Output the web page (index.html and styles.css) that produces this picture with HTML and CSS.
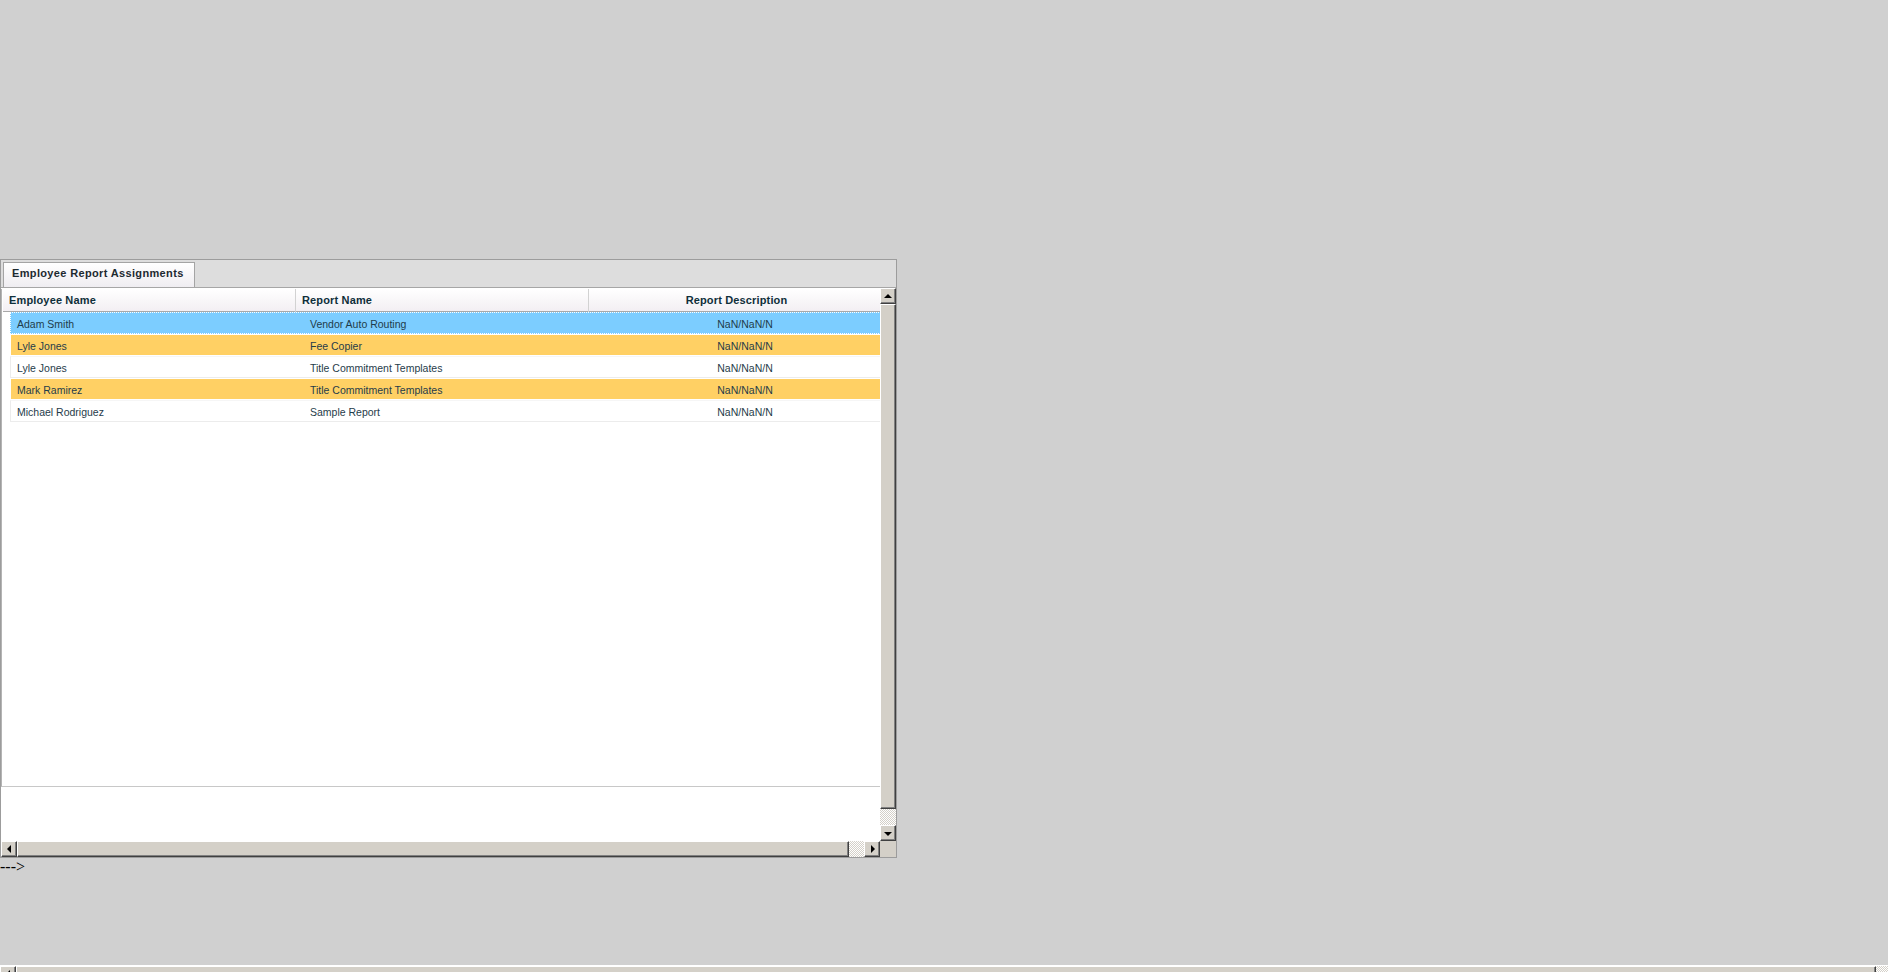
FILE: index.html
```html
<!DOCTYPE html>
<html>
<head>
    <meta charset="utf-8">
    <title>Employee Report Assignments</title>
    <link rel="stylesheet" href="styles.css">
</head>
<body>
    <div class="page">
        <div class="panel">
            <div class="tabbar">
                <div class="tab">Employee Report Assignments</div>
            </div>

            <div class="frame">
                <div class="viewport">
                    <div class="grid">
                        <div class="grid-head">
                            <div class="th">Employee Name</div>
                            <div class="th">Report Name</div>
                            <div class="th th-center">Report Description</div>
                        </div>
                        <div class="rows">
                            <div class="row row-selected">
                                <div class="td">Adam Smith</div>
                                <div class="td">Vendor Auto Routing</div>
                                <div class="td td-center">NaN/NaN/N</div>
                            </div>
                            <div class="row row-alert">
                                <div class="td">Lyle Jones</div>
                                <div class="td">Fee Copier</div>
                                <div class="td td-center">NaN/NaN/N</div>
                            </div>
                            <div class="row">
                                <div class="td">Lyle Jones</div>
                                <div class="td">Title Commitment Templates</div>
                                <div class="td td-center">NaN/NaN/N</div>
                            </div>
                            <div class="row row-alert">
                                <div class="td">Mark Ramirez</div>
                                <div class="td">Title Commitment Templates</div>
                                <div class="td td-center">NaN/NaN/N</div>
                            </div>
                            <div class="row">
                                <div class="td">Michael Rodriguez</div>
                                <div class="td">Sample Report</div>
                                <div class="td td-center">NaN/NaN/N</div>
                            </div>
                        </div>
                    </div>
                </div>

                <div class="vscroll">
                    <div class="sb-btn"><span class="arrow arrow-up"></span></div>
                    <div class="sb-thumb sb-thumb-v"></div>
                    <div class="sb-track"></div>
                    <div class="sb-btn"><span class="arrow arrow-down"></span></div>
                </div>

                <div class="hscroll">
                    <div class="sb-btn"><span class="arrow arrow-left"></span></div>
                    <div class="sb-thumb sb-thumb-h"></div>
                    <div class="sb-track"></div>
                    <div class="sb-btn"><span class="arrow arrow-right"></span></div>
                </div>

                <div class="corner"></div>
            </div>
        </div>

        <div class="trail">---&gt;</div>

        <div class="page-scroll">
            <div class="sb-btn"><span class="arrow arrow-left"></span></div>
            <div class="sb-thumb page-thumb"></div>
            <div class="sb-track"></div>
        </div>
    </div>
</body>
</html>
```

FILE: styles.css
```css
* {
    margin: 0;
    padding: 0;
    box-sizing: border-box;
}

html, body {
    height: 100%;
    overflow: hidden;
}

body {
    background: #d0d0d0;
    font-family: "Liberation Serif", serif;
    font-size: 16px;
    color: #000;
}

.page {
    padding-top: 259px;
}

/* panel + tab strip */

.panel {
    width: 897px;
    border: 1px solid #9c9c9c;
    background: #dddddd;
}

.tabbar {
    height: 28px;
    padding: 2px 0 0 2px;
    border-bottom: 1px solid #a6a6a6;
}

.tab {
    width: 192px;
    height: 25px;
    border: 1px solid #a4a4a4;
    border-bottom: none;
    background: linear-gradient(#ffffff, #efedf1);
    font-family: "Liberation Sans", Arial, sans-serif;
    font-size: 11px;
    font-weight: bold;
    letter-spacing: 0.35px;
    color: #1d2a30;
    line-height: 20px;
    padding-left: 8px;
    white-space: nowrap;
}

/* scroll frame */

.frame {
    display: grid;
    grid-template-columns: 1fr 16px;
    grid-template-rows: 553px 16px;
    background: #fff;
}

.viewport {
    overflow: hidden;
    background: #fff;
    padding-top: 1px;
}

.grid {
    width: 896px;
    height: 498px;
    border-left: 1px solid #b4b4b4;
    border-bottom: 1px solid #c8c8c8;
    font-family: "Liberation Sans", Arial, sans-serif;
    font-size: 11px;
}

.grid-head {
    display: grid;
    grid-template-columns: 293px 293px 295px;
    height: 23px;
    margin-left: 1px;
    background: linear-gradient(#ffffff, #f3eff3);
    border-bottom: 1px solid #a8a8a8;
}

.th {
    font-weight: bold;
    letter-spacing: 0.15px;
    color: #0f2f3a;
    line-height: 23px;
    padding-left: 6px;
    border-right: 1px solid #d2d2d2;
    white-space: nowrap;
}

.th-center {
    text-align: center;
    padding-left: 0;
    border-right: none;
}

.rows {
    margin-left: 8px;
}

.row {
    display: grid;
    grid-template-columns: 293px 293px 296px;
    height: 22px;
    border: 1px solid #ececec;
    border-top-color: #f6f6f6;
    background: #fff;
    background-clip: padding-box;
    color: #1f3c4a;
    font-size: 10.5px;
    padding-top: 2px;
    line-height: 19px;
}

.row-alert {
    background: #ffd064;
    border-color: #fff;
}

.row-selected {
    background: #7ccdff;
    background-clip: border-box;
    border: 1px dotted #fff;
}

.td {
    padding-left: 6px;
    white-space: nowrap;
}

.td-center {
    text-align: center;
    padding-left: 0;
}

/* classic scrollbars */

.vscroll {
    display: flex;
    flex-direction: column;
    background: #d4d0c8;
}

.hscroll,
.page-scroll {
    display: flex;
    background: #d4d0c8;
}

.sb-btn {
    flex: none;
    width: 16px;
    height: 16px;
    background: #d4d0c8;
    border: 1px solid;
    border-color: #ffffff #404040 #404040 #ffffff;
    box-shadow: inset -1px -1px #808080;
    display: flex;
    align-items: center;
    justify-content: center;
}

.sb-thumb {
    flex: none;
    background: #d4d0c8;
    border: 1px solid;
    border-color: #ffffff #404040 #404040 #ffffff;
    box-shadow: inset -1px -1px #808080;
}

.sb-thumb-v {
    width: 16px;
    height: 505px;
}

.sb-thumb-h {
    height: 16px;
    width: 832px;
}

.sb-track {
    flex: 1;
    background-color: #fff;
    background-image: repeating-conic-gradient(#d4d0c8 0 25%, #ffffff 0 50%);
    background-size: 2px 2px;
}

.corner {
    background: #d4d0c8;
}

.arrow {
    width: 0;
    height: 0;
    border: 4px solid transparent;
}

.arrow-up {
    border-bottom-color: #000;
    border-top-width: 0;
    margin-top: -1px;
}

.arrow-down {
    border-top-color: #000;
    border-bottom-width: 0;
    margin-top: 1px;
}

.arrow-left {
    border-right-color: #000;
    border-left-width: 0;
}

.arrow-right {
    border-left-color: #000;
    border-right-width: 0;
    margin-left: 1px;
}

/* stray text + page level scrollbar */

.trail {
    line-height: 18px;
    height: 18px;
}

.page-scroll {
    margin-top: 89px;
    width: 1888px;
    height: 17px;
    border-top: 1px solid #fff;
}

.page-thumb {
    height: 16px;
    width: 1860px;
}
```
